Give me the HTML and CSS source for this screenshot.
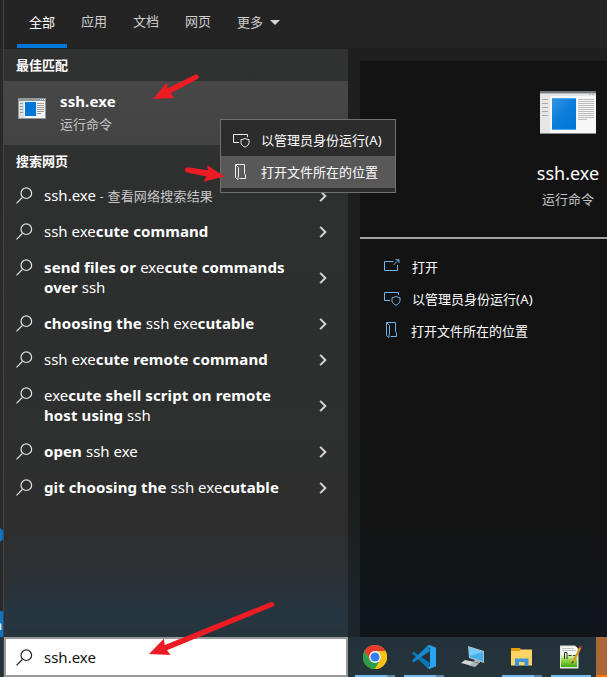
FILE: index.html
```html
<!DOCTYPE html>
<html lang="zh-CN">
<head>
<meta charset="utf-8">
<title>ssh.exe</title>
<link rel="stylesheet" href="styles.css">
</head>
<body>
<svg class="defs" width="0" height="0">
  <defs>
    <symbol id="search" viewBox="0 0 17 17"><path d="M.5 16.3 6.3 10.5"/><circle cx="10.3" cy="6.2" r="5.3"/></symbol>
    <symbol id="chev" viewBox="0 0 8 12"><path d="M1.2.9 6.3 6 1.2 11.1"/></symbol>
    <symbol id="admin" viewBox="0 0 17 15"><path d="M6 9.5H.5V1.500H14.500V4.200"/><path d="M12 5.200C10.800 6.200 9.500 6.600 8 6.600V9.500C8 11.500 9.500 13 12 14.200C14.500 13 16 11.500 16 9.500V6.600C14.500 6.600 13.200 6.200 12 5.200Z"/></symbol>
    <symbol id="folder" viewBox="0 0 13 16"><path d="M1.500 13.500V.5H10.500V9.500L11.500 11V14.500H5.500"/><path d="M1.500.8 4.500 3.500V11L3.800 15.500 1.500 13.500"/></symbol>
    <symbol id="open" viewBox="0 0 16 12"><path d="M9.500 2.500H.5V11.500H13.500V6"/><path d="M9.500 6 14.500 1M11.500.7H15V4"/></symbol>
  </defs>
</svg>
<div class="screen">
  <div class="edge"><i class="dot"></i><span class="tile">m</span></div>
  <div class="window">
    <nav class="tabs">
      <span class="tab active">全部</span><span class="tab">应用</span><span class="tab">文档</span><span class="tab">网页</span><span class="tab more">更多<i></i></span>
    </nav>
    <div class="columns">
      <section class="results">
        <h2>最佳匹配</h2>
        <div class="best">
          <svg class="appicon" width="28" height="21" viewBox="0 0 28 21"><path fill="#929a9e" d="M0 0h28v21H0z"/><path fill="#f5f5f5" d="M1 3h26v17H1z"/><path fill="#dedede" d="M1 3h5v17H1z"/><path fill="#0078d7" d="M7 4h11v14H7z"/><path stroke="#999" d="M2 5.500h3M2 8.500h3M2 11.500h3M2 14.500h3M19 5.500h7M19 7.500h7M19 9.500h7M19 11.500h7M19 13.500h7M19 15.500h4"/><path fill="#eee" d="M22 1h1v1h-1zM24 1h1v1h-1zM26 1h1v1h-1z"/></svg>
          <div><b>ssh.exe</b><small>运行命令</small></div>
        </div>
        <h2>搜索网页</h2>
        <ul>
          <li><svg class="mag"><use href="#search"/></svg><p>ssh.exe<span class="hint"> - 查看网络搜索结果</span></p><svg class="chev"><use href="#chev"/></svg></li>
          <li><svg class="mag"><use href="#search"/></svg><p>ssh exe<b>cute command</b></p><svg class="chev"><use href="#chev"/></svg></li>
          <li class="two"><svg class="mag"><use href="#search"/></svg><p><b>send files or </b>exe<b>cute commands</b><br><b>over </b>ssh</p><svg class="chev"><use href="#chev"/></svg></li>
          <li><svg class="mag"><use href="#search"/></svg><p><b>choosing the </b>ssh exe<b>cutable</b></p><svg class="chev"><use href="#chev"/></svg></li>
          <li><svg class="mag"><use href="#search"/></svg><p>ssh exe<b>cute remote command</b></p><svg class="chev"><use href="#chev"/></svg></li>
          <li class="two"><svg class="mag"><use href="#search"/></svg><p>exe<b>cute shell script on remote</b><br><b>host using </b>ssh</p><svg class="chev"><use href="#chev"/></svg></li>
          <li><svg class="mag"><use href="#search"/></svg><p><b>open </b>ssh exe</p><svg class="chev"><use href="#chev"/></svg></li>
          <li><svg class="mag"><use href="#search"/></svg><p><b>git choosing the </b>ssh exe<b>cutable</b></p><svg class="chev"><use href="#chev"/></svg></li>
        </ul>
      </section>
      <aside class="detail">
        <div class="panel">
          <header>
            <svg width="56" height="43" viewBox="0 0 56 43"><defs><linearGradient id="bl" x2="1" y2="1"><stop stop-color="#3294e2"/><stop offset=".5" stop-color="#0b7cda"/><stop offset="1" stop-color="#0078d7"/></linearGradient></defs><path fill="#f7f7f7" d="M0 0h56v43H0z"/><path fill="#747779" d="M0 0h56v2H0z"/><path fill="#babdbf" d="M0 2h56v1H0z"/><path fill="#e6e6e6" d="M0 5h10v37H0zM0 3h56v2H0z"/><path fill="#4ea7ea" d="M12 7h24v32H12z"/><path fill="url(#bl)" d="M13 8h23v30H12V8z"/><path stroke="#aaa" d="M2 8.500h6M2 12.500h6M2 16.500h6M2 20.500h6M2 24.500h6"/><path stroke="#bbb" d="M38 8.500h16M38 10.500h16M38 12.500h16M38 14.500h16M38 16.500h16M38 18.500h16M38 20.500h16M38 22.500h16M38 24.500h16M38 26.500h16M38 28.500h9M49 3.500h2M52 3.500h2"/><path fill="#8b8b8b" d="M0 42h56v1H0z"/></svg>
            <h1>ssh.exe</h1><small>运行命令</small>
          </header>
          <ul class="actions">
            <li><svg class="i-open"><use href="#open"/></svg>打开</li>
            <li><svg class="i-admin"><use href="#admin"/></svg>以管理员身份运行<span class="key">(A)</span></li>
            <li><svg class="i-folder"><use href="#folder"/></svg>打开文件所在的位置</li>
          </ul>
        </div>
      </aside>
    </div>
    <footer>
      <div class="searchbox"><svg class="mag"><use href="#search"/></svg><span>ssh.exe</span></div>
      <div class="taskbar">
        <div class="app multi"><svg viewBox="0 0 24 24"><circle cx="12" cy="12" r="12" fill="#fbc116"/><path fill="#e33b2e" d="M1.600 6A12 12 0 0 1 22.400 6H12L6.800 15z"/><path fill="#289e48" d="M1.600 6A12 12 0 0 0 12 24L17.200 15 12 17 6.800 15z"/><path fill="#fbc116" d="M22.400 6A12 12 0 0 1 12 24L17.200 15 17 9 12 6z"/><circle cx="12" cy="12" r="5.900" fill="#fff"/><circle cx="12" cy="12" r="4.600" fill="#347fea"/></svg></div>
        <div class="app multi"><svg viewBox="0 0 24 24"><path fill="#0877b9" d="M1.500 6.800 0 8.200 16 23.500 18 18z"/><path fill="#1688cf" d="M0 15.800 16 .3 18 6 1.600 17.200z"/><path fill="#28a3ee" d="M17.500 0 24 2.700V21.300L17.500 24 15.500 23 18 21V3L15.500 1z"/></svg></div>
        <div class="app idle"><svg viewBox="0 0 24 24"><path fill="#aac1cd" d="M7 1 23 6V18L8 13z"/><path fill="#46afea" d="M8 2.500 22 7V16.500L9 12z"/><path fill="#74ccfa" d="M8 2.500 22 7 8.500 11z"/><path fill="#d0d6d8" d="M4 15 14 17 9.500 20.500 0 18z"/><path fill="#aeb6ba" d="M12 17 18 18.500 14 22 8 20.500zM14 14 19 15.500V18L13 17z"/></svg></div>
        <div class="app multi"><svg viewBox="0 0 24 24"><path fill="#e3a00a" d="M1 3H10L11 5H22V9H1z"/><path fill="#ffd466" d="M1 6H9.500L11 4.500H22V20.500H1z"/><path fill="#3a97dc" d="M5 21V13.500H18.500V21H14.500V17H9V21z"/></svg></div>
        <div class="app"><svg viewBox="0 0 24 24"><defs><linearGradient id="np" x2="0" y2="1"><stop offset=".35" stop-color="#f7faf5"/><stop offset=".6" stop-color="#a5dc54"/><stop offset="1" stop-color="#3fac09"/></linearGradient></defs><path fill="#e4e8e1" d="M1 .5H16L19.500 4V23.500H1z"/><path fill="url(#np)" d="M2 2H18V22H2z"/><path stroke="#c0c6bd" d="M3 3.500h12M3 5.500h14"/><path stroke="#26352a" fill="none" d="M5.500 14V7.500H8V14M9.500 10.500h3M14 10.500h3"/><path stroke="#d99a20" stroke-width="2.200" d="M21.500 2.500 14 17"/><path stroke="#b63c3e" stroke-width="2.400" d="M22 1 21 3"/><path fill="#664326" d="M13 16 12.500 19 15 17z"/></svg></div>
        <div class="alert"></div>
      </div>
    </footer>
  </div>
  <div class="menu">
    <div><svg class="i-admin"><use href="#admin"/></svg>以管理员身份运行<span class="key">(A)</span></div>
    <div class="hover"><svg class="i-folder"><use href="#folder"/></svg>打开文件所在的位置</div>
  </div>
  <svg class="arrows" width="607" height="677" viewBox="0 0 607 677">
    <path d="M153 99 167 82.300 167.300 88.500 195 74.700Q198 74 198.700 76.600 198.800 78.200 197.300 79.200L170.500 93.300 174.500 98z"/>
    <path d="M224.500 176.500 207 165 208 170.200 187.500 167.300Q184.700 168 185 170.500 185.300 172 187 172.500L206.500 176.500 203.500 181.700z"/>
    <path d="M149 654 163.800 638.800 164.800 645 271 602Q273.800 601.500 274.500 604 274.500 605.500 273 606.500L167 650.200 170.500 655z"/>
  </svg>
</div>
</body>
</html>
```
FILE: styles.css
```css
* { box-sizing: border-box; }
body { margin: 0; background: #222; color: #fff; font: 13px/20px "Noto Sans", "Noto Sans CJK SC", sans-serif; overflow: hidden; }
.defs { position: absolute; }
h1, h2, p, ul { margin: 0; padding: 0; font-weight: normal; }
ul { list-style: none; }
svg { flex: none; }
.screen { position: relative; display: flex; width: 607px; height: 677px; overflow: hidden; }
.edge { width: 4px; overflow: hidden; border-right: 1px solid #444; background: linear-gradient(#242424 0 49px, #292929 49px 611px, #22313a 637px); display: flex; flex-direction: column; }
.dot { margin: 527px 0 0 -12px; width: 16px; height: 16px; flex: none; border-radius: 50%; background: #0875c4; }
.tile { margin-top: 68px; height: 26px; flex: none; background: #0875c4; line-height: 29px; text-indent: -10px; }
.window { width: 603px; display: flex; flex-direction: column; }
.tabs { height: 49px; display: flex; gap: 2px; padding-left: 13px; background: #242424; border-bottom: 1px solid #202020; font-family: "Noto Sans CJK SC", sans-serif; color: #cecece; }
.tab { height: 48px; padding: 0 12px; line-height: 42px; }
.active { border-bottom: 4px solid #0078d7; color: #fff; line-height: 44px; }
.more { display: flex; align-items: center; }
.more i { margin: 2px 0 0 7px; border: 5px solid transparent; border-top-color: #d5d5d5; border-bottom: 0; }
.more { line-height: 20px; padding-bottom: 5px; }
.columns { height: 588px; display: flex; }
.results { width: 344px; background: linear-gradient(#303131, #2d2f2f 45%, #2e2e2e 82%, #2c3136 90%, #263640 96%, #25333b); }
h2 { height: 32px; padding-left: 12px; line-height: 32px; font-size: 13px; font-weight: 700; font-family: "Noto Sans CJK SC", sans-serif; }
.best { height: 64px; display: flex; padding: 9px 0 0 14px; gap: 14px; background: linear-gradient(#474747, #434343); }
.appicon { margin-top: 8px; }
.best b, .best small { display: block; }
.best b { font-size: 15px; line-height: 22px; letter-spacing: .1px; }
small { font: 13px/24px "Noto Sans CJK SC", sans-serif; color: #c2c2c2; }
.results ul { padding-top: 1px; }
li { display: flex; }
.results li { height: 36px; padding: 8px 21px 0 12px; font-size: 15px; }
.results .two { height: 56px; }
.results p { flex: 1; margin: -1px 0 0 11px; white-space: nowrap; }
.results p b { letter-spacing: .1px; }
.hint { color: #c6c6c6; font-size: 13px; letter-spacing: .2px; }
.mag { width: 17px; height: 17px; margin-top: 1px; stroke: #e2e2e2; fill: none; stroke-width: 1.200; }
.chev { width: 8px; height: 12px; margin-top: 4px; stroke: #d5d5d5; fill: none; stroke-width: 2; }
.two .chev { margin-top: 14px; }
.detail { width: 259px; padding: 12px 0 0 12px; background: linear-gradient(#1f1f1f, #1b1e1e 75%, #1b252a 95%); overflow: hidden; }
.panel { width: 416px; height: 576px; background: linear-gradient(#131313 80%, #0f151b 96%, #101519); }
header { height: 178px; display: flex; flex-direction: column; align-items: center; padding-top: 30px; border-bottom: 2px solid #a2a2a2; }
h1 { margin-top: 25px; font-size: 18px; line-height: 28px; }
.actions { padding: 12px 0 0 24px; }
.actions li, .menu > div { height: 32px; display: flex; align-items: center; font-family: "Noto Sans CJK SC", sans-serif; }
.i-open, .i-admin, .i-folder { fill: none; stroke: #eee; }
.i-open { width: 16px; height: 12px; margin: -4px 12px 0 0; }
.i-admin { width: 17px; height: 15px; margin: 1px 11px 0 0; }
.i-folder { width: 13px; height: 16px; margin: 0 14px 0 1px; }
.actions svg { stroke: #70b4e8; }
.actions .i-admin { margin: -1px 11px 0 0; }
.actions .i-folder { margin: -2px 13px 0 1px; }
.key { font-family: "Noto Sans", sans-serif; letter-spacing: .3px; }
footer { display: flex; height: 40px; }
.searchbox { width: 344px; display: flex; border: 2px solid #999; background: #fff; color: #111; padding: 8px 10px; font-size: 15px; }
.searchbox svg { stroke: #222; margin: 2px 11px 0 0; }
.taskbar { width: 259px; display: flex; gap: 9px; padding-left: 7px; background: linear-gradient(#22313a, #26343b); overflow: hidden; }
.app { width: 40px; flex: none; padding-top: 8px; text-align: center; border-bottom: 2px solid #76b9ed; }
.app svg { width: 24px; height: 24px; }
.multi { border-image: linear-gradient(90deg, #76b9ed 31px, #5a88ad 31px) 2; border-style: solid; border-width: 0 0 2px; }
.idle { border-color: transparent; }
.alert { width: 11px; margin-left: -4px; flex: none; background: #a96835; border-bottom: 2px solid #ff7300; }
.menu { position: absolute; left: 220px; top: 119px; width: 176px; height: 74px; padding-top: 4px; border: 1px solid #707070; background: #2c2c2c; }
.menu > div { padding: 0 0 1px 12px; }
.menu .hover { background: #585858; }
.arrows { position: absolute; left: 0; top: 0; fill: #ed1c24; }
```
